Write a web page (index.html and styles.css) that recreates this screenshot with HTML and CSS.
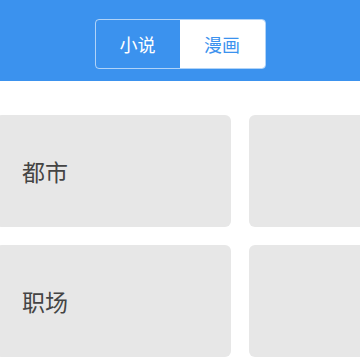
FILE: index.html
```html
<!DOCTYPE html>
<html>
 <head>
     <title>分类</title>
     <link rel="stylesheet" href="styles.css">
     <meta charset="UTF-8">
 </head>
 <body>
    <div class="header">
      <div class="tabs">
        <div class="tab">小说</div>
        <div class="tab active">漫画</div>
      </div>
    </div>
    <div class="list">
      <div class="card">都市</div>
      <div class="card"></div>
      <div class="card">职场</div>
      <div class="card"></div>
    </div>
 </body>
</html>
```

FILE: styles.css
```css
html, body {margin:0; padding:0; overflow:hidden; background:#ffffff;}
body {font-family:"Noto Sans CJK SC", "Noto Sans", sans-serif; width:360px; height:360px;}
.header {height:81px; background-color:#3b92ee; display:flex; justify-content:center; align-items:flex-start;}
.tabs {display:flex; margin-top:19px; height:50px; border:1px solid rgba(255,255,255,0.6); border-radius:4px; box-sizing:border-box; overflow:hidden;}
.tab {width:84px; display:flex; align-items:center; justify-content:center; font-size:18px; color:#ffffff;}
.tab.active {background-color:#ffffff; color:#3b92ee; width:85px;}
.list {display:grid; grid-template-columns:235px 235px; column-gap:18px; row-gap:18px; margin:34px 0 0 -4px;}
.card {height:112px; background-color:#e7e7e7; border-radius:6px; display:flex; align-items:center; padding-left:26px; font-size:23px; color:#444444;}
```
